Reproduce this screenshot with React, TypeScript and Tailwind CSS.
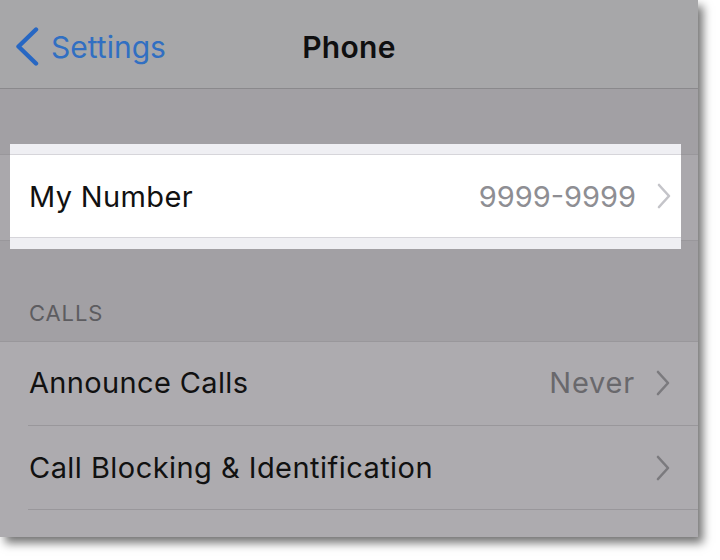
import React from "react";

const font = { fontFamily: "Inter, 'Liberation Sans', sans-serif" };

function Chevron({ color }: { color: string }) {
  return (
    <svg width="14" height="26" viewBox="0 0 14 26" className="shrink-0">
      <polyline points="2,2 12,13 2,24" fill="none" stroke={color} strokeWidth="2.6" strokeLinecap="round" strokeLinejoin="round" />
    </svg>
  );
}

export default function App() {
  return (
    <div className="w-[720px] h-[560px] bg-white overflow-hidden" style={font}>
      <div className="relative w-[698px] h-[537px] overflow-hidden flex flex-col bg-[#adabaf] shadow-[5px_6px_9px_rgba(0,0,0,0.55)]">
        {/* Nav bar */}
        <div className="h-[89px] shrink-0 bg-[#a7a7a9] border-b border-[#8a898c] grid grid-cols-[1fr_auto_1fr] items-center pt-[6px]">
          <div className="flex items-center pl-[15px] gap-[12px]">
            <svg width="24" height="40" viewBox="0 0 24 40" className="shrink-0">
              <polyline points="21,2.5 3.5,19.5 21,36.5" fill="none" stroke="#2767c3" strokeWidth="4.4" strokeLinecap="round" strokeLinejoin="round" />
            </svg>
            <span className="text-[30px] leading-none text-[#316fc2]">Settings</span>
          </div>
          <div className="text-[30px] leading-none font-semibold text-[#0f0f10] tracking-[0.3px]">Phone</div>
          <div />
        </div>

        {/* group gap */}
        <div className="h-[65px] shrink-0 bg-[#a2a0a4]" />

        {/* My Number (dimmed, under highlight) */}
        <div className="h-[87px] shrink-0 bg-[#aaa8ac] border-y border-[#99979b] flex items-center pl-[29px] pr-[28px]">
          <span className="flex-1 text-[29px] text-[#111] tracking-[0.35px]">My Number</span>
        </div>

        {/* CALLS header */}
        <div className="h-[100px] shrink-0 bg-[#a2a0a4] flex items-end pl-[29px] pb-[17px]">
          <span className="text-[22px] leading-none text-[#5d5c60] tracking-[0.9px]">CALLS</span>
        </div>

        {/* rows */}
        <div className="flex-1 bg-[#adabaf] border-t border-[#99979b] flex flex-col">
          <div className="h-[83px] shrink-0 flex items-center pl-[29px] pr-[28px] pb-[2px]">
            <span className="flex-1 text-[29px] leading-none text-[#111] tracking-[0.35px]">Announce Calls</span>
            <span className="text-[29px] leading-none text-[#69686c] mr-[21px] tracking-[0.8px]">Never</span>
            <Chevron color="#7b7a7e" />
          </div>
          <div className="h-px ml-[28px] bg-[#99979b]" />
          <div className="h-[83px] shrink-0 flex items-center pl-[29px] pr-[28px]">
            <span className="flex-1 text-[29px] leading-none text-[#111] tracking-[0.45px]">Call Blocking &amp; Identification</span>
            <Chevron color="#7b7a7e" />
          </div>
          <div className="h-px ml-[28px] bg-[#99979b]" />
          <div className="flex-1" />
        </div>

        {/* Highlight callout */}
        <div className="absolute left-[10px] top-[144px] w-[671px] h-[105px] bg-[#efeff3] flex flex-col pt-[10px]">
          <div className="h-[84px] shrink-0 bg-white border-y border-[#d6d5da] flex items-center pl-[19px] pr-[10px]">
            <span className="flex-1 text-[29px] leading-none text-[#111] tracking-[0.35px]">My Number</span>
            <span className="text-[29px] leading-none text-[#8e8e93] mr-[21px]">9999-9999</span>
            <Chevron color="#c4c4c9" />
          </div>
        </div>
      </div>
    </div>
  );
}
